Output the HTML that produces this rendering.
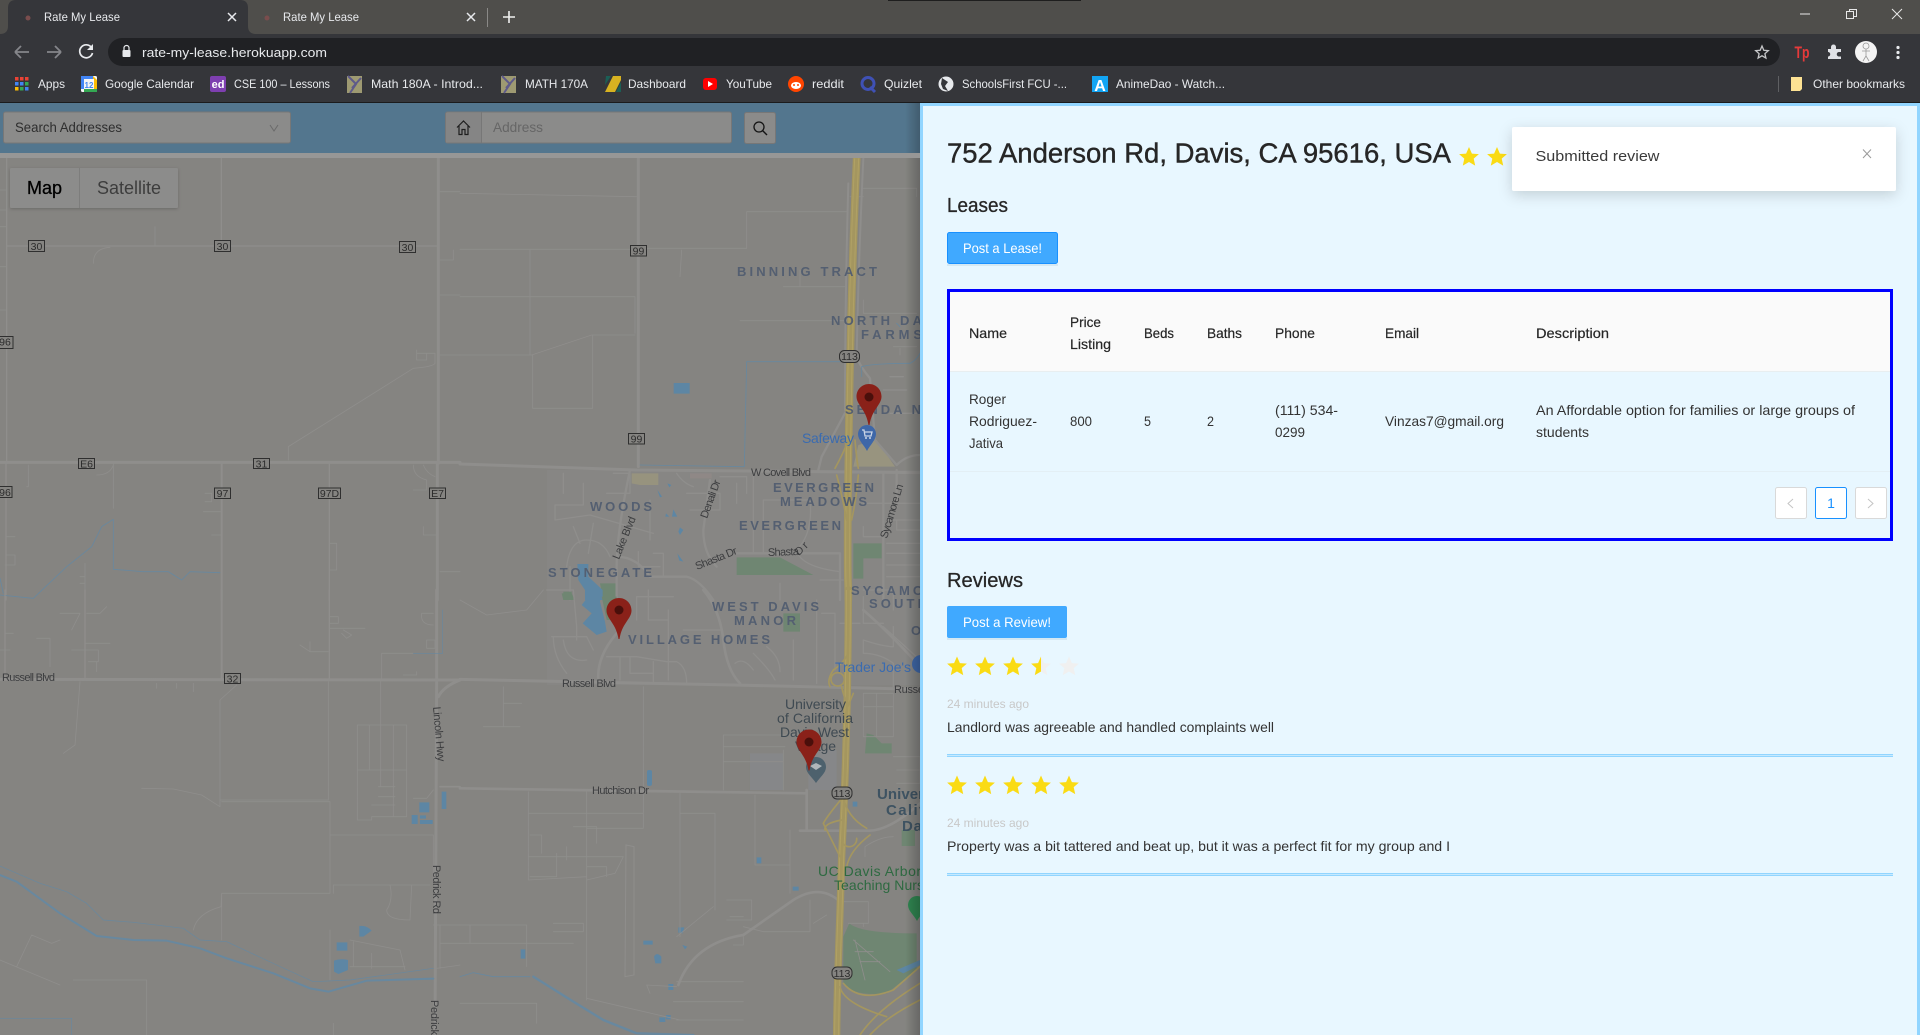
<!DOCTYPE html>
<html lang="en">
<head>
<meta charset="utf-8">
<title>Rate My Lease</title>
<style>
html,body{margin:0;padding:0;width:1920px;height:1035px;overflow:hidden;background:#858481}
svg{display:block;position:absolute;left:0;top:0}
text{font-family:"Liberation Sans",Arial,sans-serif;white-space:pre}
.c{font-size:12px;fill:#e8eaed}
.t{font-size:14px;fill:#333}
.th{font-size:14px;fill:#262626;stroke:#262626;stroke-width:.2}
.h{font-size:20px;fill:#262626;stroke:#262626;stroke-width:.3}
.g{font-size:12px;fill:#c8c8c8}
.b{font-size:14px;fill:#fff}
.l{font-size:13px;font-weight:bold;fill:#545f71}
.r{font-size:11px;fill:#3c3d3f}
.s{font-size:10.5px;fill:#2c2c2c;text-anchor:middle}
.p{font-size:14px;fill:#3a6bb0}
.d{font-size:14px;fill:#3f4a52}
.rd{fill:none;stroke:#8f8e8c;stroke-linecap:round;stroke-linejoin:round}
.th3{stroke-width:2.500}.th5{stroke-width:4}.th8{stroke-width:6}.th12{stroke-width:9}
.wt{fill:none;stroke:#68889f;stroke-linecap:round;stroke-linejoin:round}
.hw{fill:none;stroke:#a4965f;stroke-linecap:round}
.bl{fill:#5d86a4}
.sh{fill:#858481;stroke:#2f2f2f;stroke-width:1}
</style>
</head>
<body>
<svg width="1920" height="1035" viewBox="0 0 1920 1035" xmlns="http://www.w3.org/2000/svg">
<defs>
<path id="star" d="M0-10 L2.9-3.4 L9.9-2.9 L4.7 1.6 L6.2 8.6 L0 5 L-6.2 8.6 L-4.7 1.6 L-9.9-2.9 L-2.9-3.4Z"/>
<path id="pin" d="M0 0C-7 0-12.500 5.500-12.500 12.500C-12.500 21-3 25-0.500 41H0.500C3 25 12.500 21 12.500 12.500C12.500 5.500 7 0 0 0Z"/>
<clipPath id="half"><rect x="-10" y="-10" width="10" height="20"/></clipPath>
<filter id="shadow" x="-15%" y="-40%" width="130%" height="200%"><feDropShadow dx="0" dy="4" stdDeviation="7" flood-color="#000" flood-opacity=".16"/></filter>
<filter id="ctl" x="-5%" y="-10%" width="110%" height="125%"><feDropShadow dx="0" dy="1" stdDeviation="1.500" flood-color="#000" flood-opacity=".2"/></filter>
<linearGradient id="edge" x1="0" x2="1" y1="0" y2="0"><stop offset="0" stop-color="#000" stop-opacity="0"/><stop offset="1" stop-color="#000" stop-opacity=".22"/></linearGradient>
</defs>

<!-- MAP -->
<g id="map">
<rect x="0" y="103" width="920" height="932" fill="#858481"/>
<rect x="547" y="470" width="373" height="215" fill="#878684"/>

<!-- West map, top -->
<g transform="translate(0 100) scale(.33333)">
<g class="rd th3">
<path d="M340 1090V1225M255 1390V1500M865 1080V1040L1240 805Q1300 800 1305 790V760H1250M1320 480H1360V450M1320 275H1380M1320 585H1380M1320 765H1380M1320 1415H1380M280 490Q280 445 330 442M465 380V438M0 270H20M0 330H20M0 380H20M0 500H20M0 630H20M85 1095V1160H80M290 1125Q330 1125 340 1095M1240 1095Q1240 1130 1280 1140V1170H1240M1270 1095Q1280 1120 1305 1130M1270 1280V1305H1310M615 1180H635V1205H615M610 1235H665M635 1305H665M990 1330H1010V1410H990M20 1310H45M15 1395H45V1365H20M240 1430H255V1450H240M1250 750V780H1280V760"/>
</g>
<g class="rd">
<path stroke-width="4" d="M20 175V1090M18 1090V1500M664 175V440M20 438H1310M988 1090V1500"/>
<path stroke-width="6" d="M665 1090V1500"/>
<path stroke-width="9" d="M1315 175V1090M1312 1090V1500M0 1087H1380"/>
</g>
<path class="wt" stroke-width="2.500" d="M0 1485L100 1495L200 1400L275 1340L305 1280L340 1258V1408L430 1415H505L545 1440L570 1415L660 1418M0 1435L10 1480"/>
</g>

<!-- East map, top -->
<g transform="translate(460 100) scale(.33333)">
<path d="M1195 1035L1250 1020L1305 1100H1180Z" fill="#98947f"/>
<path d="M515 1120H595V1155H540L515 1150Z" fill="#97937e"/>
<path d="M690 1120H755V1135H690Z" fill="#8f8886"/>
<path fill="#6f8672" d="M830 1372H960L1060 1425H830ZM1180 1330H1265V1375H1210V1436H1180Z"/>
<path d="M305 1480H335L345 1500H310Z" fill="#6f8672"/>
<path d="M420 1450H470V1500H430Z" fill="#6f8672"/>
<path class="bl" d="M641 849H689V881H641Z"/>
<path class="bl" d="M352 1392H385L385 1430L428 1470V1500H375V1470L355 1440Z"/>
<path class="bl" d="M592 1170L606 1190L600 1192ZM622 1150L634 1155L628 1162ZM618 1240L628 1250H616ZM640 1228L652 1250H636ZM660 1282L670 1290L660 1305L655 1295ZM652 1360L670 1385L658 1382Z"/>
<g class="rd th3">
<path d="M0 280L530 290M0 448H510M210 450V765M0 590H525V700M0 765H215L395 705H525M218 765V925H398V705M560 445H860V335H1160M665 450L660 530M1020 510V560H1160M970 560H1020M840 662H1160M1210 265H1370V290M1210 290H1170M1210 600V640H1370M1300 740H1370M1320 745V765"/>
</g>
<g class="rd th5">
<path d="M285 1215H370V1150M285 1215V1260L390 1245L580 1300M400 1270L385 1360M340 1280L360 1330M320 1400Q330 1320 380 1320T450 1370M680 1180H780V1230H690M910 1200H1050M1210 1210H1380M1280 1260H1380M1310 1260V1290H1380M1210 1280V1310H1270M1280 1330H1380M1280 1360H1380M1280 1395H1380M1280 1430H1380M960 1450V1500M580 1360H610V1430M535 1355V1400H600M570 1200V1320M460 1120H510V1180H440M650 1120Q670 1150 700 1160M780 1130H860V1180M830 1150V1210M1050 1200Q1060 1300 1010 1350Q1020 1400 1140 1415M880 1120V1360M910 1200V1360M1080 1440H1150M1210 1470H1300M260 1470H340M310 1120V1180M330 1400V1500M1290 940H1370M1270 870H1340M1290 830H1330"/>
<path stroke-width="7" d="M510 1110Q470 1300 470 1400V1500M470 1370Q530 1370 570 1430H680Q720 1440 760 1500M750 1140L730 1290Q730 1360 770 1400M1270 1120V1500M1310 1110V1220M1190 770Q1200 800 1230 835L1245 1020L1310 1095M1160 930L1085 1070L1075 1110M830 1360H1140V1500M1310 1095Q1340 1065 1380 1065"/>
<path stroke-width="6" d="M1210 175Q1195 500 1190 770M1165 250Q1155 600 1155 930"/>
<path stroke-width="9" d="M535 175V1100M0 1092L530 1110L1380 1118"/>
</g>
<path class="wt" stroke-width="2.500" d="M860 785H1140M860 785L853 1100L540 1095M1205 830V800Q1240 790 1350 790Q1370 780 1380 760M1310 670L1320 680"/>
<path class="hw" stroke-width="23" d="M1190 175C1180 400 1170 700 1165 1100S1165 1400 1165 1500"/>
<path stroke="#b0a165" stroke-width="3" fill="none" d="M1184 175C1174 400 1164 700 1159 1100S1159 1400 1159 1500M1196 175C1186 400 1176 700 1171 1100S1171 1400 1171 1500"/>
<path class="hw" stroke-width="5" d="M1165 1020Q1150 1060 1125 1105M1185 1020Q1190 1080 1195 1105M1130 1125Q1145 1180 1160 1260M1195 1125Q1190 1190 1175 1260"/>
</g>

<!-- West map, bottom -->
<g transform="translate(0 590) scale(.33333)">
<path class="bl" d="M1325 605H1339V657H1325ZM1235 675H1253V702H1235ZM1260 690H1298V702H1260ZM1258 637H1288V667H1258ZM1260 676H1278V686H1260ZM1010 1057H1042V1082H1010ZM1002 1112Q1020 1105 1044 1110V1140L1015 1152L1002 1145ZM1078 1008Q1100 1005 1115 1022L1090 1040H1078Z"/>
<g class="rd th3">
<path d="M240 275L225 465L190 490M660 650V330L710 285M660 650L605 615L520 597L425 595M662 630H985V275M665 635H990V910H665L663 950Q590 970 580 1020M665 910V1050M1145 270V190H1240M1072 405H1220V680H1115V690H1072ZM1108 405V540M1180 405V680M1142 270V590M1072 540H1220M990 735H1300V880M1000 885H1290M1000 885V910M1170 885Q1180 930 1160 960Q1160 990 1230 990L1235 885M1000 885H1170M1115 645H1185M1135 590H1185M1135 620H1185M1300 600L1280 625H1240M0 1110L180 1185M50 1130L95 1035L155 1060L180 1050M220 1170H440V1335M990 1020V1170M1050 1050L1200 1080L1215 1140M1050 1130H1215M1115 1090V1135M1060 1055V1130M1300 1005H1380M1320 1005V1135M1320 1060H1380M1310 1135Q1350 1130 1380 1125M1000 1300V1335M110 145H150V230M255 160H330M215 180H295V215H265M290 215V245M180 70H240Q230 90 215 120M260 70H300L320 50M990 80H1015V100H990M990 115H1095M1030 120L1055 135L1040 145L1025 130M900 165L930 185H985M930 155V185M1265 70H1300M1265 70Q1260 105 1300 105M1280 150H1305V175H1280V150M1210 255H1250V245M0 180H30M470 280V295M530 280V295M580 280V305M15 130H40"/>
</g>
<g class="rd">
<path stroke-width="4" d="M15 0V270M255 0V270M988 0V270"/>
<path stroke-width="6" d="M665 0V270"/>
<path stroke-width="9" d="M0 268L1380 270M1310 0V270L1305 1335M1380 270Q1330 290 1315 320"/>
<path stroke-width="5" d="M1320 590H1380"/>
</g>
<path class="wt" stroke-width="2" d="M1328 60V190H1240M0 828L120 880L200 905L260 940L310 990L400 997L550 1015L600 1050L680 1055L830 1125L940 1175L1050 1170L1300 1135M0 1285H215V1335"/>
<path class="wt" stroke-width="6" d="M0 855L50 875L180 970L290 1038L400 1050L500 1052L600 1075L680 1105L820 1150L930 1195L985 1205L1100 1172L1300 1166"/>
</g>

<!-- East map, bottom -->
<g transform="translate(460 590) scale(.33333)">
<path d="M870 490H970V600H870ZM1045 480H1130V600H1045Z" fill="#868789"/>
<path fill="#6f8672" d="M1220 430L1240 435L1265 460L1295 460V490H1215ZM1325 720H1365V768H1325ZM970 70H1020V125H970Z"/>
<path fill="#6f8672" d="M1168 1000Q1200 1030 1370 1030V1140L1280 1210Q1180 1220 1150 1180V1040Z"/>
<path d="M310 5H335V30H310Z" fill="#6f8672"/>
<path d="M425 20H470L460 90H440Z" fill="#6f8672"/>
<path class="bl" d="M400 0H425L420 35L435 95L440 125L410 135L368 100L395 70L365 45Z"/>
<path class="bl" d="M561 545Q561 540 568 540Q576 540 576 545V582Q576 588 568 588Q561 588 561 582ZM890 802H904V820H890ZM1178 635H1192V650H1178ZM655 1012H673L668 1030L655 1028ZM550 1052H578V1064H550ZM582 1100Q590 1085 604 1100V1120H586ZM625 1182H640V1200H625ZM598 1282H616V1296H598ZM618 1275H632V1288H618ZM182 1078H196V1106H182ZM998 890H1016V902H998ZM667 1065L682 1070L675 1078ZM1310 1140L1380 1110V1125L1330 1150Z"/>
<path class="wt" stroke-width="2.500" d="M0 1160L40 1148L100 1160L210 1160"/>
<path class="wt" stroke-width="7" d="M220 1160L340 1235L430 1290L530 1330L700 1335"/>
<g class="rd th3">
<path d="M205 605V870M380 605V1230M550 290V715H380M205 670H550M790 435V600M790 435H1010M970 480V600M660 610V1040M660 670H765V960M650 1040L760 950M885 615V825H990M990 720V910M205 800H490L465 850L380 870M205 870L380 860M210 735H245V790M340 710H410V760M290 790V860H210M320 770V810M380 830H440V860M0 1005H200V1130M30 1005V1060M0 1060H340M280 1000H370M280 1025H370M370 1000V1025M800 930H875V990H800M810 980H850M850 1040V1065H820M650 1190L560 1185L570 1210M640 1235H850M650 1175H850M650 1290H850M1210 310H1300V440H1210ZM1250 310V440M1210 350H1300M1300 500H1380V580H1310M1310 540H1380M850 1010L910 1025H1050V930M1060 1000L1100 975M130 290V410M70 410H180M130 340H185M0 30L80 75L200 60L250 0M1150 935H1225V1000H1165M1210 1010V1000M1185 1050L1215 1170M1180 1050L1290 1145M1185 1085H1240M1200 1115H1260M790 470H975M790 515H970M0 1240H230V1300M380 1225L660 1290M1215 800V770Q1260 740 1300 740"/>
</g>
<path d="M498 765L522 770V1155L495 1160Z" fill="none" stroke="#8f8e8c" stroke-width="3"/>
<g class="rd th5">
<path d="M340 0L350 110V150M280 140Q280 200 320 250M310 150Q320 220 380 210M275 140H380L400 180M440 200H530Q560 205 620 215H650Q680 230 680 280M480 200V270M510 200V250H580M580 215V275M625 60V270M565 0V90H625M825 220Q850 200 880 240M880 190Q930 240 945 270M920 170Q960 200 960 245M1000 150V270M1070 30V280M1085 70H1125V240M1200 100H1140M1210 150Q1270 170 1300 170M1270 110L1380 210M1300 110V170M1210 150V190Q1260 190 1300 220V290M530 20V90M530 20H640M670 120H780M1300 0V60M1210 20V100H1270"/>
<path stroke-width="8" d="M470 130Q410 200 415 270M730 0Q780 60 790 150Q800 240 840 280M1210 60Q1290 130 1380 230"/>
<path stroke-width="8" d="M0 595L1040 610M1020 722H1230Q1290 720 1380 640M1040 600V720M655 1185Q700 1060 850 1035L1000 930Q1080 880 1140 935"/>
<path stroke-width="9" d="M0 268L820 285L1380 298"/>
</g>
<path class="hw" stroke-width="22" d="M1165 0C1165 200 1160 500 1145 800C1140 1000 1130 1200 1130 1335"/>
<path stroke="#b0a165" stroke-width="3" fill="none" d="M1159 0C1159 200 1154 500 1139 800C1134 1000 1124 1200 1124 1335M1171 0C1171 200 1166 500 1151 800C1146 1000 1136 1200 1136 1335"/>
<g class="hw" stroke-width="5">
<circle cx="1133" cy="268" r="20"/>
<path d="M1110 290Q1100 270 1120 240Q1150 220 1165 190M1165 345Q1150 320 1145 290M1180 310Q1150 380 1150 400M1150 620Q1100 680 1090 700Q1110 740 1140 800M1150 620Q1160 680 1220 715M1230 735Q1170 780 1160 830M1145 690Q1090 700 1095 720M1145 750A20 20 0 1 0 1190 745M1150 1180Q1200 1240 1300 1200L1380 1130M1140 1190Q1150 1240 1280 1280M1380 1180Q1250 1260 1200 1335M1380 1230Q1280 1280 1230 1335"/>
</g>
</g>

<!-- Map labels -->
<g>
<text class="l" x="737" y="276" textLength="140">BINNING TRACT</text>
<text class="l" x="831" y="325" textLength="91">NORTH DA</text>
<text class="l" x="861" y="339" textLength="61">FARMS</text>
<text class="l" x="845" y="414" textLength="76">SENDA N</text>
<text class="l" x="773" y="492" textLength="101">EVERGREEN</text>
<text class="l" x="780" y="506" textLength="87">MEADOWS</text>
<text class="l" x="739" y="530" textLength="102">EVERGREEN</text>
<text class="l" x="590" y="511" textLength="62">WOODS</text>
<text class="l" x="548" y="577" textLength="104">STONEGATE</text>
<text class="l" x="851" y="595" textLength="72">SYCAMO</text>
<text class="l" x="869" y="608" textLength="58">SOUTH</text>
<text class="l" x="712" y="611" textLength="107">WEST DAVIS</text>
<text class="l" x="734" y="625" textLength="62">MANOR</text>
<text class="l" x="628" y="644" textLength="142">VILLAGE HOMES</text>
<text class="l" x="911" y="635">O</text>
<text class="r" x="751" y="476" textLength="60">W Covell Blvd</text>
<text class="r" x="2" y="681" textLength="53">Russell Blvd</text>
<text class="r" x="562" y="687" textLength="54">Russell Blvd</text>
<text class="r" x="894" y="693" textLength="30">Russe</text>
<text class="r" x="592" y="794" textLength="57">Hutchison Dr</text>
<text class="r" transform="translate(619 560) rotate(-68)" textLength="45">Lake Blvd</text>
<text class="r" transform="translate(707 519) rotate(-70)" textLength="40">Denali Dr</text>
<text class="r" transform="translate(887 539) rotate(-73)" textLength="56">Sycamore Ln</text>
<text class="r" transform="translate(697 570) rotate(-22)" textLength="44">Shasta Dr</text>
<text class="r" transform="translate(768 556) rotate(-2)" textLength="31">Shasta</text>
<text class="r" transform="translate(799 556) rotate(-45)" textLength="14">Dr</text>
<text class="r" transform="translate(433 707) rotate(85)" textLength="55">Lincoln Hwy</text>
<text class="r" transform="translate(433 865) rotate(90)" textLength="49">Pedrick Rd</text>
<text class="r" transform="translate(431 1000) rotate(90)" textLength="35">Pedrick</text>
<text class="p" x="802" y="443" textLength="52">Safeway</text>
<text class="p" x="835" y="672" textLength="76">Trader Joe's</text>
<text class="d" x="785" y="709" textLength="61">University</text>
<text class="d" x="777" y="723" textLength="76">of California</text>
<text class="d" x="780" y="737" textLength="69">Davis West</text>
<text class="d" x="795" y="751" textLength="41">Village</text>
<text x="877" y="799" font-size="15" font-weight="bold" fill="#3e5362" textLength="47">Univer</text>
<text x="886" y="815" font-size="15" font-weight="bold" fill="#3e5362" textLength="38">Calif</text>
<text x="902" y="831" font-size="15" font-weight="bold" fill="#3e5362" textLength="20">Da</text>
<text x="818" y="876" font-size="14" fill="#2e6a41" textLength="124">UC Davis Arboretu</text>
<text x="834" y="890" font-size="14" fill="#2e6a41" textLength="90">Teaching Nurs</text>
</g>

<!-- Route shields -->
<g>
<rect class="sh" x="28.500" y="240.500" width="16" height="11"/><text class="s" x="36.500" y="250">30</text>
<rect class="sh" x="214.500" y="240.500" width="16" height="11"/><text class="s" x="222.500" y="250">30</text>
<rect class="sh" x="399.500" y="241.500" width="16" height="11"/><text class="s" x="407.500" y="251">30</text>
<rect class="sh" x="-4" y="336.500" width="17" height="12"/><text class="s" x="5" y="345.500">96</text>
<rect class="sh" x="-4" y="486.500" width="16" height="11"/><text class="s" x="5" y="496">96</text>
<rect class="sh" x="78.500" y="458.500" width="16" height="10"/><text class="s" x="86.500" y="467.500">E6</text>
<rect class="sh" x="253.500" y="458.500" width="16" height="10"/><text class="s" x="261.500" y="467.500">31</text>
<rect class="sh" x="214.500" y="488" width="16" height="10.500"/><text class="s" x="222.500" y="497">97</text>
<rect class="sh" x="318.500" y="488" width="22" height="10.500"/><text class="s" x="329.500" y="497">97D</text>
<rect class="sh" x="429.500" y="488" width="16" height="10.500"/><text class="s" x="437.500" y="497">E7</text>
<rect class="sh" x="224.500" y="673.500" width="16" height="10"/><text class="s" x="232.500" y="682.500">32</text>
<rect class="sh" x="630.500" y="245.500" width="16" height="10.500"/><text class="s" x="638.500" y="254.500">99</text>
<rect class="sh" x="628.500" y="433.500" width="16" height="10.500"/><text class="s" x="636.500" y="442.500">99</text>
<rect class="sh" x="839.500" y="350.500" width="20" height="12" rx="5"/><text class="s" x="849.500" y="360">113</text>
<rect class="sh" x="832" y="787" width="20" height="12" rx="5"/><text class="s" x="842" y="797">113</text>
<rect class="sh" x="832" y="967" width="20" height="12" rx="5"/><text class="s" x="842" y="977">113</text>
</g>

<!-- POI markers -->
<g>
<path d="M867 425C861 425 858 430 858 434C858 440 864 445 867 451C870 445 876 440 876 434C876 430 873 425 867 425Z" fill="#3e67a8"/>
<path d="M862 430H864L865 436H871L872 432H865" fill="none" stroke="#c9d4e6" stroke-width="1.300"/><circle cx="866" cy="438" r="1" fill="#c9d4e6"/><circle cx="870" cy="438" r="1" fill="#c9d4e6"/>
<path d="M816 757C810 757 806 762 806 767C806 773 812 777 816 783C820 777 826 773 826 767C826 762 822 757 816 757Z" fill="#4d616d"/>
<path d="M810 766L816 763L822 766L816 770Z" fill="#b0b6ba"/>
<path d="M917 896C911 896 908 901 908 905C908 911 914 915 917 921C920 915 926 911 926 905C926 901 923 896 917 896Z" fill="#2f8550"/>
<circle cx="921" cy="664" r="9" fill="#3e67a8"/>
</g>

<!-- Red pins -->
<g>
<use href="#pin" x="869" y="384" fill="#8a2119"/><circle cx="869" cy="397" r="4.500" fill="#4a0f0b"/>
<use href="#pin" x="619" y="598" fill="#8a2119"/><circle cx="619" cy="610" r="4.500" fill="#4a0f0b"/>
<use href="#pin" x="809" y="729.500" fill="#8a2119"/><circle cx="809" cy="742" r="4.500" fill="#4a0f0b"/>
</g>

<!-- Map type control -->
<g filter="url(#ctl)">
<rect x="10" y="168" width="168" height="40" rx="1.500" fill="#8c8c8b"/>
</g>
<rect x="79" y="168" width="1" height="40" fill="#7d7d7c"/>
<text x="27" y="194" font-size="18" fill="#000" stroke="#000" stroke-width=".3" textLength="35" lengthAdjust="spacingAndGlyphs">Map</text>
<text x="97" y="194" font-size="18" fill="#3d3d3d" textLength="64" lengthAdjust="spacingAndGlyphs">Satellite</text>

<rect x="905" y="103" width="15" height="932" fill="url(#edge)"/>

<!-- Search header -->
<rect x="0" y="103" width="920" height="50" fill="#53768e"/>
<rect x="0" y="153" width="920" height="5" fill="#979796"/>
<rect x="905" y="103" width="15" height="50" fill="url(#edge)"/>
<rect x="3.500" y="112" width="287" height="31" rx="2" fill="#8b8b8a" stroke="#777"/>
<text x="15" y="132" font-size="14" fill="#2e2e2e" textLength="107" lengthAdjust="spacingAndGlyphs">Search Addresses</text>
<path d="M270 125L274 131L278 125" fill="none" stroke="#6a6a6a" stroke-width="1"/>
<rect x="445.500" y="112" width="286" height="31" rx="2" fill="#8b8b8a" stroke="#777"/>
<path d="M446 113H481.500V142.500H446Z" fill="#858585"/>
<path d="M481.500 112V143" stroke="#777"/>
<path d="M457 127.500L463.500 121L470 127.500M459 126V134.500H462V129.500H465V134.500H468V126" fill="none" stroke="#1e1e1e" stroke-width="1.200"/>
<text x="493" y="132" font-size="14" fill="#666" textLength="50" lengthAdjust="spacingAndGlyphs">Address</text>
<rect x="744.500" y="112.500" width="31" height="31" rx="2" fill="#8b8b8a" stroke="#777"/>
<circle cx="759" cy="127" r="5" fill="none" stroke="#141414" stroke-width="1.300"/>
<path d="M762.500 130.500L767 135" stroke="#141414" stroke-width="1.400"/>
</g>

<!-- BROWSER CHROME -->
<g id="chrome">
<rect x="0" y="0" width="1920" height="34" fill="#4f4e4b"/>
<rect x="888" y="0" width="193" height="1" fill="#1e1e1e"/>
<rect x="0" y="34" width="1920" height="68" fill="#35363a"/>
<rect x="0" y="102" width="1920" height="1" fill="#1b1b1c"/>
<path d="M0 34Q8 34 8 26V8Q8 0 16 0H240Q248 0 248 8V26Q248 34 256 34Z" fill="#35363a"/>
<circle cx="28" cy="18" r="2.500" fill="#7a4d4d"/>
<text class="c" x="44" y="21" textLength="76" lengthAdjust="spacingAndGlyphs">Rate My Lease</text>
<path d="M228 13L236 21M236 13L228 21" stroke="#e8eaed" stroke-width="1.500"/>
<circle cx="267" cy="18" r="2.500" fill="#7a4d4d"/>
<text class="c" x="283" y="21" textLength="76" lengthAdjust="spacingAndGlyphs">Rate My Lease</text>
<path d="M467 13L475 21M475 13L467 21" stroke="#e8eaed" stroke-width="1.500"/>
<rect x="487" y="8" width="1" height="19" fill="#8a8987"/>
<path d="M509 11V23M503 17H515" stroke="#f0f0f0" stroke-width="1.600"/>
<path d="M1800 14H1810" stroke="#e8e8e8" stroke-width="1"/>
<path d="M1846.500 11.500H1853.500V18.500H1846.500ZM1849.500 11.500V9.500H1856.500V16.500H1853.500" fill="none" stroke="#e8e8e8"/>
<path d="M1892 9L1902 19M1902 9L1892 19" stroke="#e8e8e8" stroke-width="1"/>

<path d="M15 52H29M15 52L21 46M15 52L21 58" fill="none" stroke="#85868a" stroke-width="1.800"/>
<path d="M61 52H47M61 52L55 46M61 52L55 58" fill="none" stroke="#85868a" stroke-width="1.800"/>
<path d="M91.500 47.500A6.500 6.500 0 1 0 92.500 53" fill="none" stroke="#e8eaed" stroke-width="1.700"/>
<path d="M93 44V50H87Z" fill="#e8eaed"/>
<rect x="108" y="38" width="1672" height="28" rx="14" fill="#202124"/>
<rect x="122.500" y="50" width="8" height="7" rx="1" fill="#e8eaed"/>
<path d="M124 50V48A2.500 2.500 0 0 1 129 48V50" fill="none" stroke="#e8eaed" stroke-width="1.200"/>
<text x="142" y="57" font-size="13" fill="#e8eaed" textLength="185" lengthAdjust="spacingAndGlyphs">rate-my-lease.herokuapp.com</text>
<path d="M1762 46L1763.800 50.300L1768.300 50.700L1764.900 53.700L1765.900 58.100L1762 55.800L1758.100 58.100L1759.100 53.700L1755.700 50.700L1760.200 50.300Z" fill="none" stroke="#c5c6c8" stroke-width="1.300"/>
<text x="1794.500" y="58" font-size="17" font-weight="bold" fill="#e63a3a" textLength="15" lengthAdjust="spacingAndGlyphs">Tp</text>
<path d="M1828 49H1831V47A2.500 2.500 0 0 1 1836 47V49H1841V52H1839A2.200 2.200 0 0 0 1839 56.500H1841V59H1828V56.500A2.200 2.200 0 0 0 1828 52Z" fill="#dfe1e5"/>
<circle cx="1866" cy="52" r="11" fill="#f4f4f4"/>
<circle cx="1866" cy="46" r="3" fill="none" stroke="#999" stroke-width=".8"/>
<path d="M1866 49V56M1862 51H1870M1866 56L1863 61M1866 56L1869 61" fill="none" stroke="#999" stroke-width=".8"/>
<circle cx="1898" cy="47.500" r="1.600" fill="#e8eaed"/><circle cx="1898" cy="52.500" r="1.600" fill="#e8eaed"/><circle cx="1898" cy="57.500" r="1.600" fill="#e8eaed"/>

<!-- Bookmarks -->
<g>
<g fill="#ea4335"><rect x="15" y="77" width="3.500" height="3.500"/><rect x="20" y="77" width="3.500" height="3.500"/><rect x="25" y="77" width="3.500" height="3.500"/></g>
<g fill="#4285f4"><rect x="15" y="82" width="3.500" height="3.500"/><rect x="20" y="82" width="3.500" height="3.500"/></g><rect x="25" y="82" width="3.500" height="3.500" fill="#34a853"/>
<g fill="#fbbc04"><rect x="15" y="87" width="3.500" height="3.500"/></g><rect x="20" y="87" width="3.500" height="3.500" fill="#34a853"/><rect x="25" y="87" width="3.500" height="3.500" fill="#4285f4"/>
<text class="c" x="38" y="88" textLength="27" lengthAdjust="spacingAndGlyphs">Apps</text>

<rect x="81" y="76" width="16" height="16" rx="1.500" fill="#f5f5f5"/>
<path d="M81 76H93V79H84V89H81Z" fill="#4285f4"/><path d="M93 76L97 80V89H94V79H93Z" fill="#fbbc04"/><path d="M84 89H97V92H84Z" fill="#34a853"/>
<text x="89" y="88" font-size="8" font-weight="bold" fill="#4285f4" text-anchor="middle">12</text>
<text class="c" x="105" y="88" textLength="89" lengthAdjust="spacingAndGlyphs">Google Calendar</text>

<rect x="210" y="76" width="16" height="16" rx="2" fill="#7e3fb0"/>
<text x="218" y="88" font-size="11" font-weight="bold" fill="#fff" text-anchor="middle">ed</text>
<text class="c" x="234" y="88" textLength="96" lengthAdjust="spacingAndGlyphs">CSE 100 – Lessons</text>

<rect x="347" y="76" width="15" height="17" fill="#9e9a72"/><path d="M348 76L356 84L350 93M361 78L352 88" stroke="#5e5a8a" stroke-width="2" fill="none"/>
<text class="c" x="371" y="88" textLength="112" lengthAdjust="spacingAndGlyphs">Math 180A - Introd...</text>

<rect x="501" y="76" width="15" height="17" fill="#9e9a72"/><path d="M502 76L510 84L504 93M515 78L506 88" stroke="#5e5a8a" stroke-width="2" fill="none"/>
<text class="c" x="525" y="88" textLength="63" lengthAdjust="spacingAndGlyphs">MATH 170A</text>

<path d="M605 92L613 76H621V80L615 92Z" fill="#d7b221"/><path d="M605 85L611 76H606Z" fill="#1b5f56"/><path d="M616 92L621 82V92Z" fill="#1b5f56"/>
<text class="c" x="628" y="88" textLength="58" lengthAdjust="spacingAndGlyphs">Dashboard</text>

<rect x="703" y="78" width="14" height="12" rx="3" fill="#f00"/><path d="M708 81L713 84L708 87Z" fill="#fff"/>
<text class="c" x="726" y="88" textLength="46" lengthAdjust="spacingAndGlyphs">YouTube</text>

<circle cx="796" cy="84" r="8" fill="#ff4500"/><ellipse cx="796" cy="85.500" rx="5" ry="3.500" fill="#fff"/><circle cx="794" cy="85" r="1" fill="#ff4500"/><circle cx="798" cy="85" r="1" fill="#ff4500"/>
<text class="c" x="812" y="88" textLength="32" lengthAdjust="spacingAndGlyphs">reddit</text>

<circle cx="868" cy="83.500" r="6" fill="none" stroke="#3f51b5" stroke-width="3"/><path d="M870 87L875 92" stroke="#3f51b5" stroke-width="3"/>
<text class="c" x="884" y="88" textLength="38" lengthAdjust="spacingAndGlyphs">Quizlet</text>

<circle cx="946" cy="84" r="7.500" fill="#e8eaed"/><path d="M942 78L948 82L945 86L948 91L943 89L941 84Z" fill="#35363a"/>
<text class="c" x="962" y="88" textLength="105" lengthAdjust="spacingAndGlyphs">SchoolsFirst FCU -...</text>

<rect x="1092" y="76" width="16" height="16" fill="#12a5f4"/>
<text x="1100" y="91" font-size="16" font-weight="bold" fill="#fff" text-anchor="middle">A</text>
<text class="c" x="1116" y="88" textLength="109" lengthAdjust="spacingAndGlyphs">AnimeDao - Watch...</text>

<rect x="1778" y="76" width="1" height="16" fill="#5f6063"/>
<path d="M1791 77H1802V89L1800 91H1791Z" fill="#fde293"/>
<text class="c" x="1813" y="88" textLength="92" lengthAdjust="spacingAndGlyphs">Other bookmarks</text>
</g>
</g>

<!-- DETAIL PANEL -->
<g id="panel">
<rect x="920" y="103" width="1000" height="932" fill="#91d5ff"/>
<rect x="923" y="106" width="994" height="929" fill="#e8f7ff"/>

<text x="947" y="162.500" font-size="28" fill="#262626" stroke="#262626" stroke-width=".4" textLength="504" lengthAdjust="spacingAndGlyphs">752 Anderson Rd, Davis, CA 95616, USA</text>
<use href="#star" x="1469" y="157" fill="#fadb14"/>
<use href="#star" x="1497" y="157" fill="#fadb14"/>

<text class="h" x="947" y="212" textLength="61" lengthAdjust="spacingAndGlyphs">Leases</text>
<rect x="947.500" y="232.500" width="110" height="31" rx="2" fill="#40a9ff" stroke="#1890ff"/>
<rect x="947" y="264" width="111" height="2" fill="#d4e8f3"/>
<text class="b" x="963" y="253" textLength="79" lengthAdjust="spacingAndGlyphs">Post a Lease!</text>

<!-- Lease table -->
<rect x="948.500" y="290.500" width="943" height="249" fill="none" stroke="#0000ff" stroke-width="3"/>
<rect x="950" y="292" width="940" height="79" fill="#fafafa"/>
<rect x="950" y="371" width="940" height="1" fill="#e8eef0"/>
<rect x="950" y="471" width="940" height="1" fill="#e3eff5"/>
<text class="th" x="969" y="338" textLength="38" lengthAdjust="spacingAndGlyphs">Name</text>
<text class="th" x="1070" y="327" textLength="31" lengthAdjust="spacingAndGlyphs">Price</text>
<text class="th" x="1070" y="349" textLength="41" lengthAdjust="spacingAndGlyphs">Listing</text>
<text class="th" x="1144" y="338" textLength="30" lengthAdjust="spacingAndGlyphs">Beds</text>
<text class="th" x="1207" y="338" textLength="35" lengthAdjust="spacingAndGlyphs">Baths</text>
<text class="th" x="1275" y="338" textLength="40" lengthAdjust="spacingAndGlyphs">Phone</text>
<text class="th" x="1385" y="338" textLength="34" lengthAdjust="spacingAndGlyphs">Email</text>
<text class="th" x="1536" y="338" textLength="73" lengthAdjust="spacingAndGlyphs">Description</text>

<text class="t" x="969" y="404" textLength="37" lengthAdjust="spacingAndGlyphs">Roger</text>
<text class="t" x="969" y="426" textLength="68" lengthAdjust="spacingAndGlyphs">Rodriguez-</text>
<text class="t" x="969" y="448" textLength="34" lengthAdjust="spacingAndGlyphs">Jativa</text>
<text class="t" x="1070" y="426" textLength="22" lengthAdjust="spacingAndGlyphs">800</text>
<text class="t" x="1144" y="426" textLength="7" lengthAdjust="spacingAndGlyphs">5</text>
<text class="t" x="1207" y="426" textLength="7" lengthAdjust="spacingAndGlyphs">2</text>
<text class="t" x="1275" y="415" textLength="63" lengthAdjust="spacingAndGlyphs">(111) 534-</text>
<text class="t" x="1275" y="437" textLength="30" lengthAdjust="spacingAndGlyphs">0299</text>
<text class="t" x="1385" y="426" textLength="119" lengthAdjust="spacingAndGlyphs">Vinzas7@gmail.org</text>
<text class="t" x="1536" y="415" textLength="319" lengthAdjust="spacingAndGlyphs">An Affordable option for families or large groups of</text>
<text class="t" x="1536" y="437" textLength="53" lengthAdjust="spacingAndGlyphs">students</text>

<!-- Pagination -->
<rect x="1775.500" y="487.500" width="31" height="31" rx="2" fill="#fff" stroke="#d9d9d9"/>
<path d="M1793 499L1788 503.500L1793 508" fill="none" stroke="#c4c4c4"/>
<rect x="1815.500" y="487.500" width="31" height="31" rx="2" fill="#fff" stroke="#1890ff"/>
<text x="1831" y="508" font-size="14" fill="#1890ff" text-anchor="middle">1</text>
<rect x="1855.500" y="487.500" width="31" height="31" rx="2" fill="#fff" stroke="#d9d9d9"/>
<path d="M1868 499L1873 503.500L1868 508" fill="none" stroke="#c4c4c4"/>

<!-- Reviews -->
<text class="h" x="947" y="587" textLength="76" lengthAdjust="spacingAndGlyphs">Reviews</text>
<rect x="947" y="606" width="120" height="32" rx="2" fill="#40a9ff"/>
<rect x="947" y="638" width="120" height="2" fill="#d4e8f3"/>
<text class="b" x="963" y="627" textLength="88" lengthAdjust="spacingAndGlyphs">Post a Review!</text>

<use href="#star" x="957" y="666.500" fill="#fadb14"/>
<use href="#star" x="985" y="666.500" fill="#fadb14"/>
<use href="#star" x="1013" y="666.500" fill="#fadb14"/>
<use href="#star" x="1041" y="666.500" fill="#f0f0f0"/>
<g transform="translate(1041 666.500)"><path clip-path="url(#half)" d="M0-10 L2.9-3.4 L9.9-2.9 L4.7 1.6 L6.2 8.6 L0 5 L-6.2 8.6 L-4.7 1.6 L-9.9-2.9 L-2.9-3.4Z" fill="#fadb14"/></g>
<use href="#star" x="1069" y="666.500" fill="#f0f0f0"/>
<text class="g" x="947" y="708" textLength="82" lengthAdjust="spacingAndGlyphs">24 minutes ago</text>
<text class="t" x="947" y="732" textLength="327" lengthAdjust="spacingAndGlyphs">Landlord was agreeable and handled complaints well</text>
<rect x="947" y="754" width="946" height="3" fill="#91d5ff"/><rect x="947" y="755" width="946" height="1" fill="#c5e9ff"/>

<use href="#star" x="957" y="785.500" fill="#fadb14"/>
<use href="#star" x="985" y="785.500" fill="#fadb14"/>
<use href="#star" x="1013" y="785.500" fill="#fadb14"/>
<use href="#star" x="1041" y="785.500" fill="#fadb14"/>
<use href="#star" x="1069" y="785.500" fill="#fadb14"/>
<text class="g" x="947" y="827" textLength="82" lengthAdjust="spacingAndGlyphs">24 minutes ago</text>
<text class="t" x="947" y="851" textLength="503" lengthAdjust="spacingAndGlyphs">Property was a bit tattered and beat up, but it was a perfect fit for my group and I</text>
<rect x="947" y="873" width="946" height="3" fill="#91d5ff"/><rect x="947" y="874" width="946" height="1" fill="#c5e9ff"/>

<!-- Toast -->
<rect x="1512" y="127" width="384" height="64" rx="2" fill="#fff" filter="url(#shadow)"/>
<text x="1535.500" y="161" font-size="15" fill="#3a3a3a" textLength="124" lengthAdjust="spacingAndGlyphs">Submitted review</text>
<path d="M1863 149.500L1871 158M1871 149.500L1863 158" stroke="#9a9a9a" stroke-width="1"/>
</g>
</svg>
</body>
</html>
